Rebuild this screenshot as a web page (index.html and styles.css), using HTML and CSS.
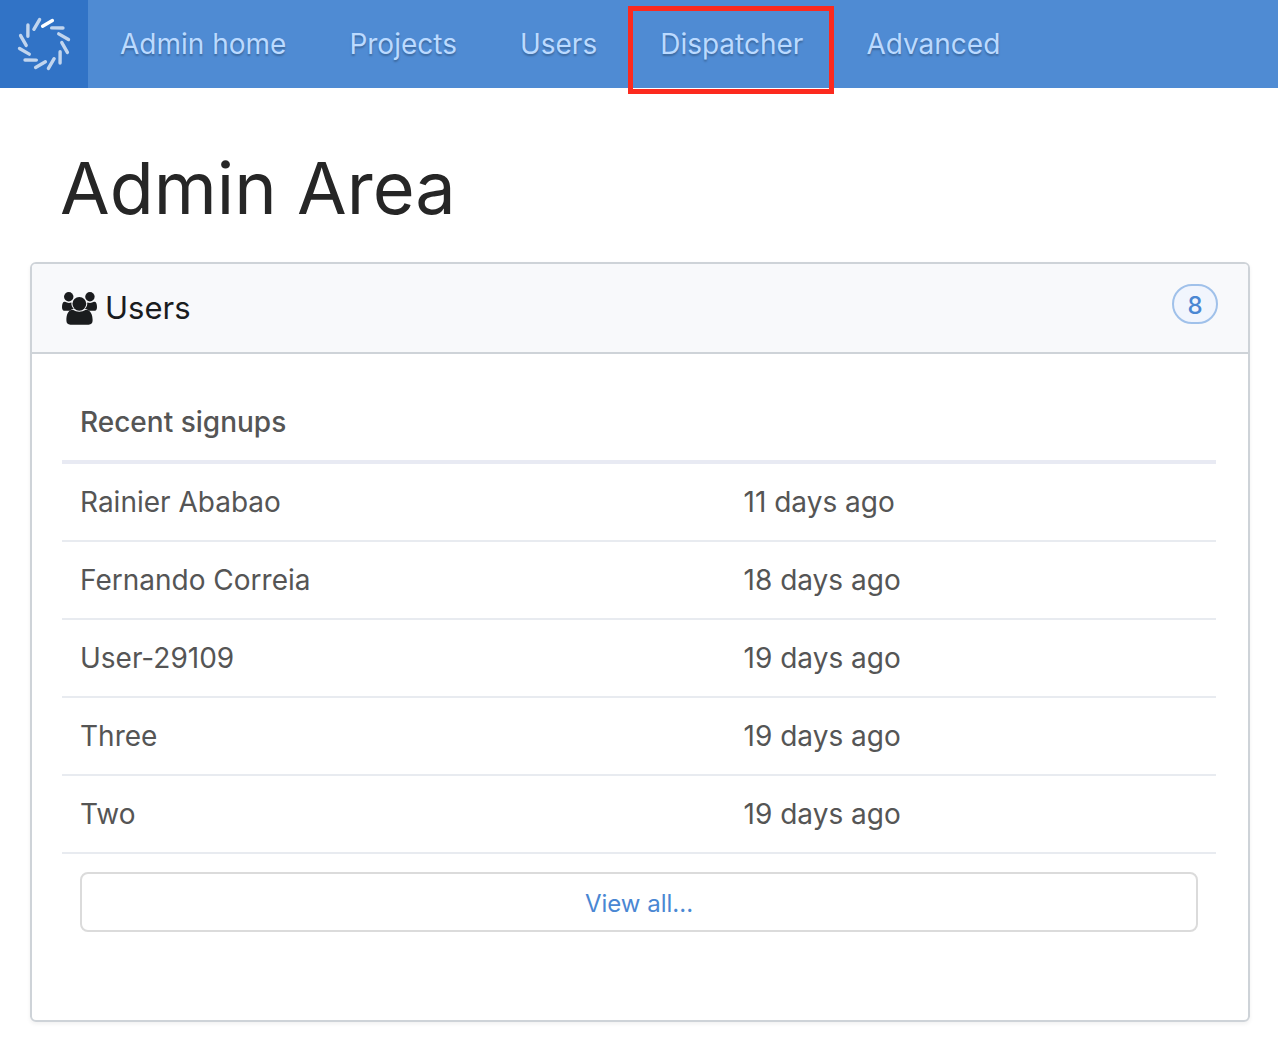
FILE: index.html
```html
<!DOCTYPE html>
<html lang="en">
<head>
  <meta charset="utf-8">
  <meta name="viewport" content="width=device-width, initial-scale=1">
  <title>Admin Area</title>
  <link rel="stylesheet" href="styles.css">
</head>
<body>
  <header class="topbar">
    <a class="brand" href="#" aria-label="Home">
      <svg class="brand-mark" viewBox="-30 -30 60 60" aria-hidden="true">
        <defs><path id="blade" d="M-1.4 -17.8L8.4 -23.4"/></defs>
        <g class="blades">
          <use href="#blade" transform="rotate(30)"/>
          <use href="#blade" transform="rotate(60)"/>
          <use href="#blade" transform="rotate(90)"/>
          <use href="#blade" transform="rotate(120)"/>
          <use href="#blade" transform="rotate(150)"/>
          <use href="#blade" transform="rotate(180)"/>
          <use href="#blade" transform="rotate(210)"/>
          <use href="#blade" transform="rotate(240)"/>
          <use href="#blade" transform="rotate(270)"/>
          <use href="#blade" transform="rotate(300)"/>
          <use href="#blade" transform="rotate(330)"/>
        </g>
        <use class="blade-lit" href="#blade"/>
      </svg>
    </a>
    <nav class="menu">
      <a class="menu-link" href="#">Admin home</a>
      <a class="menu-link" href="#">Projects</a>
      <a class="menu-link" href="#">Users</a>
      <a class="menu-link menu-link-marked" href="#">Dispatcher</a>
      <a class="menu-link" href="#">Advanced</a>
    </nav>
  </header>

  <main class="page">
    <h1 class="page-title">Admin Area</h1>
    <section class="card">
      <header class="card-header">
        <h2 class="card-title">
          <svg class="card-icon" viewBox="0 0 104 98" aria-hidden="true">
            <circle cx="20" cy="14" r="14"/>
            <circle cx="83" cy="14" r="14"/>
            <path d="M0 45C0 34 3 28 9 29C16 33 22 33 28 31Q27 43 35 49Q28 51 23 56H9Q0 56 0 45Z"/>
            <path d="M104 45C104 34 101 28 95 29C88 33 82 33 75 31Q76 43 68 49Q75 51 80 56H95Q104 56 104 45Z"/>
            <circle cx="51.500" cy="35" r="20.500"/>
            <path d="M32 53Q51 65 71 53C85 53 91 68 91 84Q91 97 79 97H25Q13 97 13 84C13 68 18 53 32 53Z"/>
          </svg>
          <span>Users</span>
        </h2>
        <span class="badge">8</span>
      </header>
      <div class="card-body">
        <table class="signups">
          <colgroup><col><col class="col-when"></colgroup>
          <thead>
            <tr><th scope="col" colspan="2">Recent signups</th></tr>
          </thead>
          <tbody>
            <tr><td>Rainier Ababao</td><td>11 days ago</td></tr>
            <tr><td>Fernando Correia</td><td>18 days ago</td></tr>
            <tr><td>User-29109</td><td>19 days ago</td></tr>
            <tr><td>Three</td><td>19 days ago</td></tr>
            <tr><td>Two</td><td>19 days ago</td></tr>
          </tbody>
        </table>
        <div class="card-actions">
          <button class="view-all" type="button">View all...</button>
        </div>
      </div>
    </section>
  </main>
</body>
</html>
```
FILE: styles.css
```css
* {
  box-sizing: border-box;
}

body {
  margin: 0;
  background: #fff;
  color: #555;
  font-family: Inter, "Liberation Sans", sans-serif;
  font-size: 28px;
  line-height: 40px;
}

.topbar {
  display: flex;
  height: 88px;
  background: #4f8bd3;
}

.brand {
  display: flex;
  align-items: center;
  justify-content: center;
  width: 88px;
  background: #3173c6;
}

.brand-mark {
  width: 60px;
  height: 60px;
  fill: none;
  stroke: #fff;
  stroke-width: 3.4;
  stroke-linecap: round;
}

.blades {
  stroke: #c1d5ee;
}

.menu {
  display: flex;
}

.menu-link {
  position: relative;
  display: flex;
  align-items: center;
  padding: 0 31px 0 32px;
  color: #bbdaff;
  text-decoration: none;
  text-shadow: 0 2px 2px rgba(0, 0, 0, 0.25);
  white-space: nowrap;
}

.menu-link-marked::after {
  content: "";
  position: absolute;
  inset: 6px 0 -6px;
  border: 5px solid #fc2a1e;
}

.page {
  padding: 50px 28px 22px 30px;
}

.page-title {
  margin: 0 30px 24px;
  color: #262626;
  font-size: 72px;
  font-weight: 400;
  line-height: 100px;
}

.card {
  border: 2px solid #ced3d8;
  border-radius: 6px;
  box-shadow: 0 2px 4px rgba(0, 0, 0, 0.06);
}

.card-header {
  display: flex;
  align-items: flex-start;
  justify-content: space-between;
  padding: 20px 30px;
  border-bottom: 2px solid #ced3d8;
  border-radius: 4px 4px 0 0;
  background: #f8f9fb;
}

.card-title {
  display: flex;
  align-items: center;
  gap: 8px;
  margin: 0;
  color: #1a1c1e;
  font-size: 31px;
  font-weight: 400;
  line-height: 48px;
}

.card-icon {
  width: 35px;
  height: 33px;
  fill: currentColor;
}

.badge {
  width: 46px;
  height: 40px;
  border: 2px solid #a0c1ea;
  border-radius: 20px;
  background: #f1f5fd;
  color: #4a87d3;
  font-size: 24px;
  font-weight: 500;
  line-height: 40px;
  text-align: center;
}

.card-body {
  padding: 30px 32px 88px 30px;
}

.signups {
  width: 100%;
  border-collapse: separate;
  border-spacing: 0;
  table-layout: fixed;
}

.col-when {
  width: 42.5%;
}

.signups th,
.signups td {
  padding: 18px;
  text-align: left;
}

.signups th {
  border-bottom: 4px solid #e8eaf3;
  font-weight: 500;
}

.signups td {
  border-bottom: 2px solid #e8ebf0;
}

.card-actions {
  padding: 18px 18px 0;
}

.view-all {
  display: block;
  width: 100%;
  height: 60px;
  padding: 4px 0 0;
  border: 2px solid #dbdbdb;
  border-radius: 8px;
  background: #fff;
  color: #4a87d3;
  font: inherit;
  font-size: 24px;
}
```
